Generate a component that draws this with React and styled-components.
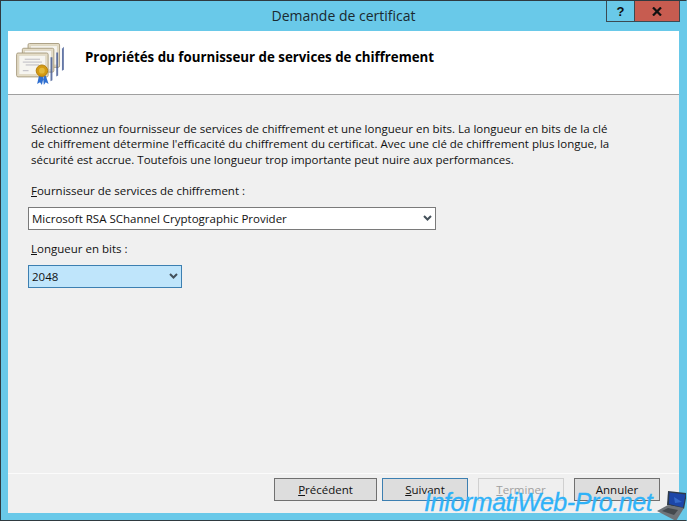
import React from "react";
import styled, { createGlobalStyle } from "styled-components";

const Global = createGlobalStyle`
  html, body { margin: 0; padding: 0; background: #69c9e9; }
  #root { width: 687px; height: 521px; }
  * { box-sizing: border-box; }
`;

const Win = styled.div`
  position: relative;
  width: 687px;
  height: 521px;
  display: flex;
  flex-direction: column;
  background: #69c9e9;
  border: 1px solid #2f3a40;
  border-right-color: #69c9e9;
  font-family: "Open Sans", "Noto Sans", sans-serif;
  font-size: 11.5px;
  color: #111;
  overflow: hidden;
`;
const TitleBar = styled.div`
  position: relative;
  height: 30px;
  flex: none;
  display: flex;
  align-items: flex-start;
  justify-content: flex-end;
  padding-right: 6px;
`;
const Title = styled.div`
  position: absolute;
  left: 0;
  right: 0;
  top: 5px;
  text-align: center;
  font-size: 14px;
  line-height: 20px;
  color: #1a2a30;
`;
const WinBtn = styled.div`
  width: ${p => p.$w}px;
  height: 21px;
  display: flex;
  align-items: center;
  justify-content: center;
  border: 1px solid #3b4a52;
  border-top: none;
  margin-left: -1px;
  background: ${p => p.$bg};
  font-family: "Liberation Sans", sans-serif;
  font-weight: 700;
  font-size: 13px;
  color: #111;
`;
const Panel = styled.div`
  flex: 1;
  margin: 0 7px 7px 7px;
  display: flex;
  flex-direction: column;
  background: #f0f0f0;
`;
const Header = styled.div`
  height: 64px;
  flex: none;
  display: flex;
  align-items: flex-start;
  background: #fff;
  border-bottom: 1px solid #a0a0a0;
  padding: 12px 0 0 8px;
`;
const HeaderTitle = styled.div`
  margin: 5px 0 0 21px;
  font-weight: 700;
  font-size: 13.3px;
  line-height: 18px;
  color: #000;
`;
const Body = styled.div`
  flex: 1;
  padding: 26px 0 0 23px;
`;
const Intro = styled.p`
  margin: 0;
  width: 600px;
  font-size: 11.5px;
  line-height: 15.3px;
`;
const Label = styled.div`
  font-size: 11.5px;
  line-height: 16px;
  margin-top: ${p => p.$mt}px;
  u { text-underline-offset: 1px; }
`;
const Select = styled.div`
  width: ${p => p.$w}px;
  height: 23px;
  margin: 8px 0 0 -3px;
  display: flex;
  align-items: center;
  justify-content: space-between;
  padding: 0 3px 0 3px;
  background: ${p => (p.$focus ? "#bfe5fb" : "#fff")};
  border: 1px solid ${p => (p.$focus ? "#3c7fb1" : "#7a7a7a")};
`;
const Footer = styled.div`
  height: 40px;
  flex: none;
  display: flex;
  justify-content: flex-end;
  align-items: flex-start;
  padding: 4px 19px 0 0;
  border-top: 1px solid #fbfbfb;
`;
const Btn = styled.div`
  width: ${p => p.$w}px;
  height: 23px;
  margin-left: ${p => p.$ml}px;
  display: flex;
  align-items: center;
  justify-content: center;
  background: ${p => (p.$disabled ? "#efefef" : "#dddddd")};
  border: 1px solid ${p => (p.$disabled ? "#d0d0d0" : p.$primary ? "#3c7fb1" : "#707070")};
  color: ${p => (p.$disabled ? "#a0a0a0" : "#111")};
  font-size: 11.5px;
  u { text-underline-offset: 1px; }
`;
const Watermark = styled.div`
  position: absolute;
  left: 423px;
  top: 487px;
  font-family: "Liberation Sans", sans-serif;
  font-style: italic;
  font-size: 25px;
  line-height: 28px;
  letter-spacing: -0.45px;
  color: #2fb2f8;
  -webkit-text-stroke: 0.3px #2fb2f8;
  white-space: nowrap;
`;
const Laptop = styled.svg`
  position: absolute;
  left: 654px;
  top: 488px;
`;

const Chevron = () => (
  <svg width="9" height="6" viewBox="0 0 9 6">
    <path d="M1 1l3.5 3.5L8 1" fill="none" stroke="#44505a" strokeWidth="2" />
  </svg>
);

const CertSheet = ({ x, y }) => (
  <g transform={`translate(${x} ${y})`}>
    <rect x="0.5" y="0.5" width="33" height="25" rx="1.5" fill="#e4dcc6" stroke="#a89c80" />
    <rect x="3" y="3" width="28" height="20" fill="#f6f5f0" stroke="#d3ccb6" strokeWidth="0.5" />
    <path d="M9 7h16M7 10h20M10 13h14M7 19h6M21 19h6" stroke="#a9a9b4" strokeWidth="0.8" />
  </g>
);

const CertIcon = () => (
  <svg width="48" height="42" viewBox="0 0 50 44">
    <path d="M50 4v24l-2 1V6z" fill="#3d5590" opacity=".8" />
    <CertSheet x="12" y="0" />
    <path d="M44 10v24l-2 1V10z" fill="#3d5590" opacity=".8" />
    <CertSheet x="6" y="5" />
    <path d="M38 15v24l-2 1V15z" fill="#3d5590" opacity=".8" />
    <CertSheet x="0" y="10" />
    <path d="M24 34l-2 9 3-2 2 3 2-9zM31 34l3 9-3-2-2 3-1-9z" fill="#2f6fd0" />
    <circle cx="27" cy="29" r="6" fill="#d49a12" stroke="#b27d0a" />
    <circle cx="27" cy="29" r="3" fill="#e4b93a" />
  </svg>
);

export default function App() {
  return (
    <Win>
      <Global />
      <TitleBar>
        <Title>Demande de certificat</Title>
        <WinBtn $w={29} $bg="transparent">?</WinBtn>
        <WinBtn $w={46} $bg="#c75c50">
          <svg width="10" height="9" viewBox="0 0 10 9">
            <path d="M1 .5l8 8M9 .5l-8 8" stroke="#111" strokeWidth="2.2" />
          </svg>
        </WinBtn>
      </TitleBar>
      <Panel>
        <Header>
          <CertIcon />
          <HeaderTitle>Propriétés du fournisseur de services de chiffrement</HeaderTitle>
        </Header>
        <Body>
          <Intro>
            Sélectionnez un fournisseur de services de chiffrement et une longueur en bits. La longueur en bits de la clé
            <br />
            de chiffrement détermine l'efficacité du chiffrement du certificat. Avec une clé de chiffrement plus longue, la
            <br />
            sécurité est accrue. Toutefois une longueur trop importante peut nuire aux performances.
          </Intro>
          <Label $mt={16}><u>F</u>ournisseur de services de chiffrement :</Label>
          <Select $w={408}>
            <span>Microsoft RSA SChannel Cryptographic Provider</span>
            <Chevron />
          </Select>
          <Label $mt={11}><u>L</u>ongueur en bits :</Label>
          <Select $w={154} $focus>
            <span>2048</span>
            <Chevron />
          </Select>
        </Body>
        <Footer>
          <Btn $w={103}><span><u>P</u>récédent</span></Btn>
          <Btn $w={86} $ml={5} $primary><span><u>S</u>uivant</span></Btn>
          <Btn $w={86} $ml={10} $disabled><span><u>T</u>erminer</span></Btn>
          <Btn $w={86} $ml={10}>Annuler</Btn>
        </Footer>
      </Panel>
      <Watermark>InformatiWeb-Pro.net</Watermark>
      <Laptop width="33" height="33" viewBox="0 0 33 33">
        <path d="M13 2l19 2-3 16-17-4z" fill="#2e3a4a" />
        <path d="M14.500 3.500l16 2-2.500 13-14-3.500z" fill="#1c46a8" />
        <path d="M19 8l8 5-7 1z" fill="#3f78d8" opacity=".7" />
        <path d="M2 22l11-6 16 3-8 13z" fill="#6e7378" />
        <path d="M7 22l6-3 10 2-4 5z" fill="#44494e" />
      </Laptop>
    </Win>
  );
}
